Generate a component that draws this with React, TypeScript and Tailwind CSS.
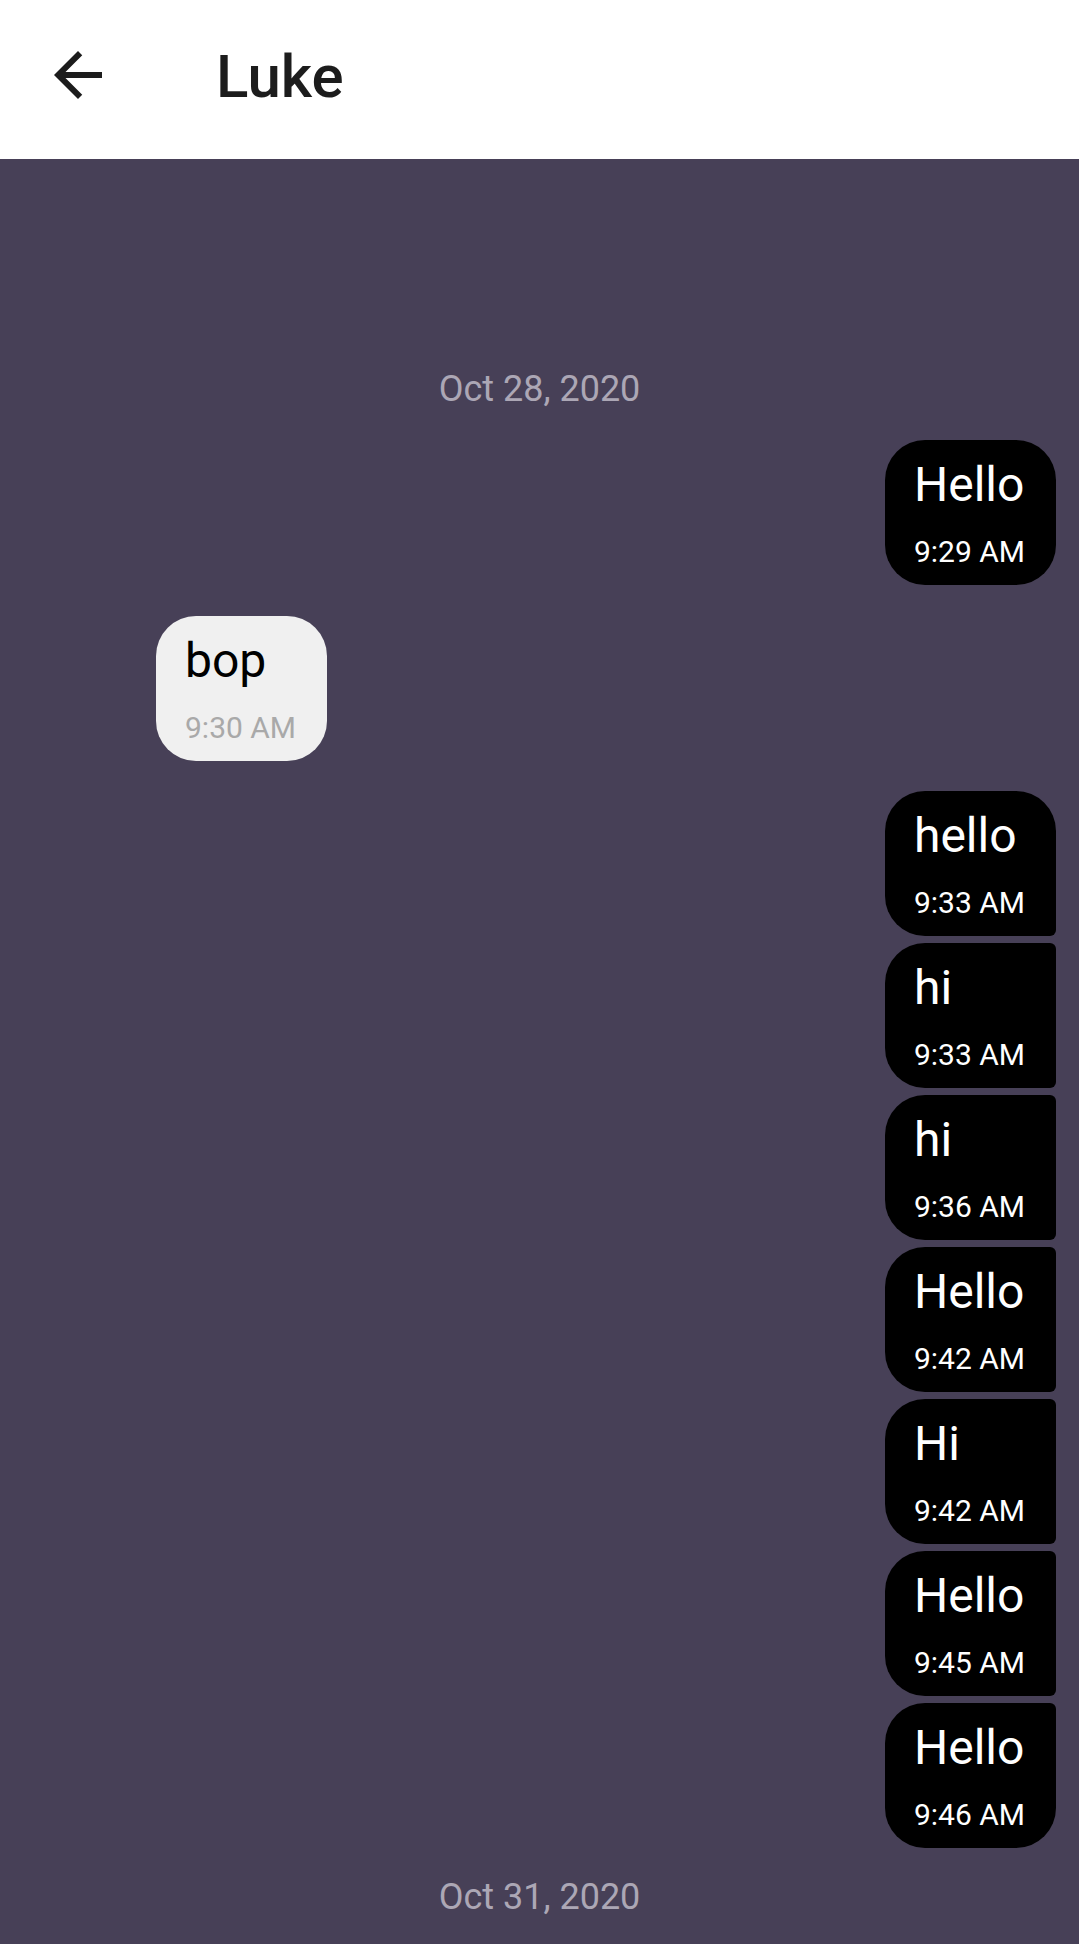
import React from "react";

type Corner = "single" | "first" | "middle" | "last";

function radiusClass(pos: Corner): string {
  switch (pos) {
    case "first":
      return "rounded-tl-[40px] rounded-tr-[40px] rounded-bl-[40px] rounded-br-[6px]";
    case "middle":
      return "rounded-tl-[40px] rounded-tr-[6px] rounded-bl-[40px] rounded-br-[6px]";
    case "last":
      return "rounded-tl-[40px] rounded-tr-[6px] rounded-bl-[40px] rounded-br-[40px]";
    default:
      return "rounded-[40px]";
  }
}

function Outgoing({ text, time, pos, mt }: { text: string; time: string; pos: Corner; mt: string }) {
  return (
    <div className={`self-end mr-[23px] bg-black pl-[29px] pr-[31px] pt-[17px] pb-[16px] ${radiusClass(pos)} ${mt}`}>
      <div className="text-[48px] leading-[56px] text-white">{text}</div>
      <div className="mt-[21px] text-[30px] leading-[35px] text-white whitespace-nowrap">{time}</div>
    </div>
  );
}

function DateLabel({ text, mt }: { text: string; mt: string }) {
  return (
    <div className={`self-center text-[36px] leading-[42px] text-[#aca7b5] ${mt}`}>{text}</div>
  );
}

export default function App() {
  const group: { text: string; time: string }[] = [
    { text: "hello", time: "9:33 AM" },
    { text: "hi", time: "9:33 AM" },
    { text: "hi", time: "9:36 AM" },
    { text: "Hello", time: "9:42 AM" },
    { text: "Hi", time: "9:42 AM" },
    { text: "Hello", time: "9:45 AM" },
    { text: "Hello", time: "9:46 AM" },
  ];
  return (
    <div className="w-[1079px] h-[1944px] overflow-hidden bg-[#474057] font-['Roboto','Liberation_Sans',sans-serif] flex flex-col">
      <header className="h-[159px] shrink-0 bg-white flex items-center">
        <svg
          viewBox="0 0 24 24"
          className="ml-[42px] -mt-[9px] w-[72px] h-[72px] shrink-0"
          fill="#1c1c1c"
        >
          <path d="M20 11H7.83l5.59-5.59L12 4l-8 8 8 8 1.41-1.41L7.83 13H20v-2z" />
        </svg>
        <div className="ml-[102px] -mt-[5px] text-[60px] leading-[70px] font-medium text-[#1c1c1c]">Luke</div>
      </header>
      <main className="flex flex-col">
        <DateLabel text="Oct 28, 2020" mt="mt-[209px]" />
        <Outgoing text="Hello" time="9:29 AM" pos="single" mt="mt-[30px]" />
        <div className="self-start ml-[156px] mt-[31px] bg-[#f0f0f0] rounded-[40px] pl-[29px] pr-[31px] pt-[17px] pb-[16px]">
          <div className="text-[48px] leading-[56px] text-black">bop</div>
          <div className="mt-[21px] text-[30px] leading-[35px] text-[#a9a9a9] whitespace-nowrap">9:30 AM</div>
        </div>
        {group.map((m, i) => (
          <Outgoing
            key={i}
            text={m.text}
            time={m.time}
            pos={i === 0 ? "first" : i === group.length - 1 ? "last" : "middle"}
            mt={i === 0 ? "mt-[30px]" : "mt-[7px]"}
          />
        ))}
        <DateLabel text="Oct 31, 2020" mt="mt-[28px]" />
      </main>
    </div>
  );
}
